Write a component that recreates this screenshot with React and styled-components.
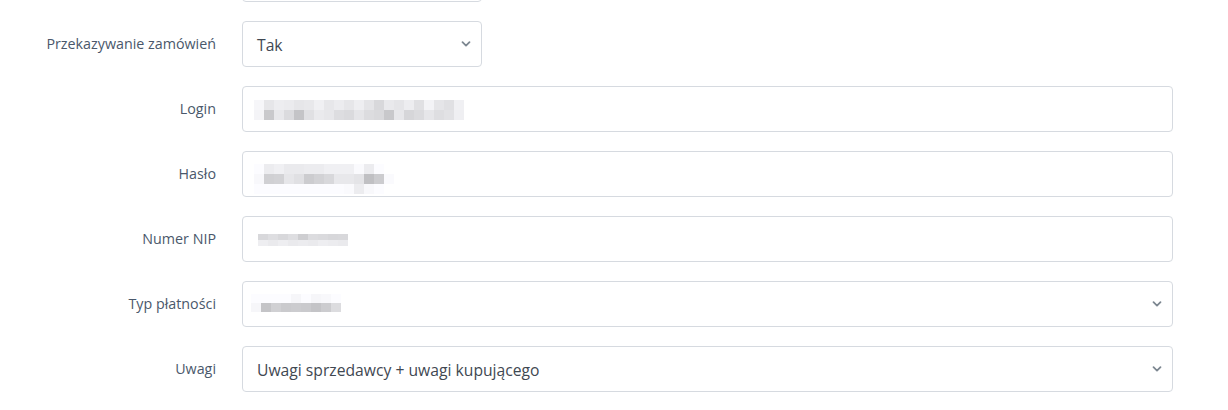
import React from 'react';
import styled, { createGlobalStyle } from 'styled-components';

const GlobalStyle = createGlobalStyle`
  html, body {
    margin: 0;
    padding: 0;
    background: #fff;
    overflow: hidden;
  }
  body {
    font-family: 'Open Sans', 'Noto Sans', sans-serif;
  }
`;

const Form = styled.div`
  margin-top: -44px;
  width: 1173px;
  display: flex;
  flex-direction: column;
  gap: 19px;
`;

const Row = styled.div`
  display: grid;
  grid-template-columns: 216px ${p => (p.$narrow ? '240px' : '1fr')};
  column-gap: 26px;
  align-items: center;
`;

const Label = styled.label`
  text-align: right;
  font-size: 14.3px;
  color: #4a586b;
  line-height: 20px;
`;

const Field = styled.div`
  position: relative;
  box-sizing: border-box;
  height: 46px;
  border: 1px solid #d6dae0;
  border-radius: 4px;
  background: #fff;
  display: flex;
  align-items: center;
  padding: 1px 40px 0 ${p => p.$pad ?? 14}px;
  font-size: 15.7px;
  color: #3f4852;
`;

const Chevron = styled.svg`
  position: absolute;
  right: 10px;
  top: 50%;
  margin-top: -5px;
  width: 10px;
  height: 10px;
`;

const Pixels = styled.div`
  display: grid;
  grid-template-columns: repeat(${p => p.$cols}, 10px);
  grid-auto-rows: ${p => p.$rowH || 10}px;
  margin-top: ${p => p.$top || 0}px;
`;

const Cell = styled.span`
  display: block;
  background: ${p => p.$c};
`;

const g = v => `rgb(${v},${v},${Math.min(v + 3, 255)})`;

const login = [
  [246, 230, 237, 235, 230, 232, 240, 231, 236, 230, 238, 228, 216, 233, 229, 237, 224, 243, 229, 224, 240],
  [244, 201, 232, 219, 196, 224, 234, 231, 221, 218, 229, 220, 217, 200, 231, 214, 219, 230, 222, 226, 239],
];
const haslo = [
  [255, 236, 240, 234, 234, 236, 236, 240, 240, 240, 250, 236, 255],
  [248, 208, 210, 230, 224, 204, 210, 216, 232, 232, 228, 192, 204, 250],
  [255, 255, 255, 255, 255, 255, 255, 255, 255, 250, 236, 248, 255],
];
const nip = [
  [216, 222, 216, 222, 206, 220, 218, 215, 216],
  [238, 234, 238, 234, 236, 234, 238, 236, 234],
];
const typ = [
  [255, 255, 255, 255, 246, 255, 246, 248, 255],
  [246, 196, 208, 202, 204, 202, 196, 204, 220],
];

function Pixelated({ data, ...rest }) {
  const cols = Math.max(...data.map(r => r.length));
  return (
    <Pixels $cols={cols} {...rest}>
      {data.map((row, i) =>
        Array.from({ length: cols }).map((_, j) => (
          <Cell key={i + '-' + j} $c={row[j] !== undefined ? g(Math.min(row[j], 252)) : 'transparent'} />
        ))
      )}
    </Pixels>
  );
}

function Arrow() {
  return (
    <Chevron viewBox="0 0 10 10">
      <path d="M1.5 3.2 L5 6.6 L8.5 3.2" fill="none" stroke="#7d8791" strokeWidth="1.8" strokeLinecap="round" strokeLinejoin="round" />
    </Chevron>
  );
}

export default function App() {
  return (
    <>
      <GlobalStyle />
      <Form>
        <Row $narrow>
          <Label />
          <Field />
        </Row>
        <Row $narrow>
          <Label>Przekazywanie zamówień</Label>
          <Field>
            Tak
            <Arrow />
          </Field>
        </Row>
        <Row>
          <Label>Login</Label>
          <Field $pad={11}>
            <Pixelated data={login} />
          </Field>
        </Row>
        <Row>
          <Label>Hasło</Label>
          <Field $pad={11}>
            <Pixelated data={haslo} $top={8} />
          </Field>
        </Row>
        <Row>
          <Label>Numer NIP</Label>
          <Field $pad={15}>
            <Pixelated data={nip} $rowH={6} />
          </Field>
        </Row>
        <Row>
          <Label>Typ płatności</Label>
          <Field $pad={8}>
            <Pixelated data={typ} $rowH={9} $top={-4} />
            <Arrow />
          </Field>
        </Row>
        <Row>
          <Label>Uwagi</Label>
          <Field>
            Uwagi sprzedawcy + uwagi kupującego
            <Arrow />
          </Field>
        </Row>
      </Form>
    </>
  );
}
